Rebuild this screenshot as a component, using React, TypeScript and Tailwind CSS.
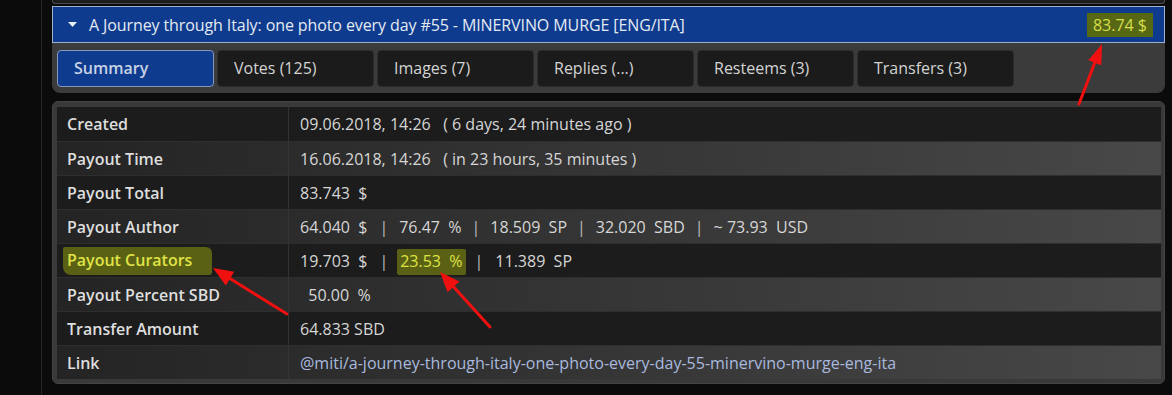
import React from "react";

const Sep = () => <span className="px-[10px] text-[#bdbdbd]">|</span>;

const rows: { label: React.ReactNode; value: React.ReactNode }[] = [
  { label: "Created", value: "09.06.2018, 14:26   ( 6 days, 24 minutes ago )" },
  { label: "Payout Time", value: "16.06.2018, 14:26   ( in 23 hours, 35 minutes )" },
  { label: "Payout Total", value: "83.743  $" },
  {
    label: "Payout Author",
    value: (
      <>
        {"64.040  $"}
        <span className="pl-[12px] pr-[11px] text-[#bdbdbd]">|</span>
        {"76.47  %"}
        <Sep />
        {"18.509  SP"}
        <Sep />
        {"32.020  SBD"}
        <Sep />
        {"~ 73.93  USD"}
      </>
    ),
  },
  {
    label: (
      <span className="bg-[#5a6114] text-[#dfe345] -ml-[4px] pl-[4px] pr-[20px] pt-[1px] pb-[3px] rounded-[2px_6px_3px_8px]">
        Payout Curators
      </span>
    ),
    value: (
      <>
        {"19.703  $"}
        <span className="pl-[12px] pr-[9px] text-[#bdbdbd]">|</span>
        <span className="bg-[#5a6114] text-[#dfe345] px-[3px] pt-[1px] pb-[3px] rounded-[2px]">{"23.53  %"}</span>
        <span className="pl-[9px] pr-[12px] text-[#bdbdbd]">|</span>
        {"11.389  SP"}
      </>
    ),
  },
  { label: "Payout Percent SBD", value: "  50.00  %" },
  { label: "Transfer Amount", value: "64.833 SBD" },
  {
    label: "Link",
    value: (
      <span className="text-[#a9b9df]">@miti/a-journey-through-italy-one-photo-every-day-55-minervino-murge-eng-ita</span>
    ),
  },
];

const tabs = ["Summary", "Votes (125)", "Images (7)", "Replies (...)", "Resteems (3)", "Transfers (3)"];

export default function App() {
  return (
    <div className="relative w-[1172px] h-[395px] overflow-hidden bg-[#0b0b0b] font-['Open_Sans',sans-serif] text-[16px]">
      <div className="ml-[41px] h-full border-l border-[#262626] pl-[10px] w-[1124px]">
        {/* previous panel remnant */}
        <div className="h-[4px] bg-[#1c1c1c] border-x border-b border-[#4a4a4a] rounded-b-[3px]" />
        {/* header */}
        <div className="mt-[2px] h-[37px] bg-[#0e3b8d] border border-[#9fb0cc] flex items-center pl-[15px] pr-[11px]">
          <svg width="9" height="6" viewBox="0 0 9 6" className="mr-[12px]">
            <polygon points="0,0 9,0 4.5,5" fill="#e8eef8" />
          </svg>
          <span className="text-[#e4eaf4] leading-none tracking-[-0.1px]">
            A Journey through Italy: one photo every day #55 - MINERVINO MURGE [ENG/ITA]
          </span>
          <span className="ml-auto bg-[#566814] text-[#d6df4c] px-[6px] h-[24px] flex items-center leading-none">
            83.74 $
          </span>
        </div>
        {/* tabs */}
        <div className="h-[50px] bg-[#3b3b3b] rounded-b-[8px] flex items-center gap-[3px] pl-[5px]">
          {tabs.map((t, i) =>
            i === 0 ? (
              <div
                key={t}
                className="w-[157px] h-[37px] rounded-[4px] bg-[#0e3b8d] border border-[#8597bd] flex items-center pl-[16px] font-semibold text-[#c7d2e6]"
              >
                {t}
              </div>
            ) : (
              <div
                key={t}
                className="w-[157px] h-[37px] rounded-[4px] bg-[#1b1b1b] border border-[#2c2c2c] flex items-center pl-[16px] text-[#d3d3d3]"
              >
                {t}
              </div>
            )
          )}
        </div>
        {/* table */}
        <div className="mt-[8px] bg-[#393939] border border-[#444] rounded-[6px] pt-[5px] pl-[4px] pr-[3px] pb-[4px]">
          {rows.map((r, i) => (
            <div
              key={i}
              className={
                "flex h-[34px] items-center " +
                (i > 0 ? "border-t border-[#2e2e2e] " : "") +
                (i % 2 === 1 ? "bg-linear-to-r from-[#242424] to-[#484848]" : "bg-[#1c1c1c]")
              }
            >
              <div className="w-[232px] h-full flex items-center pl-[10px] font-semibold text-[#dedede] border-r border-[#333]">
                {r.label}
              </div>
              <div className="flex-1 pl-[11px] text-[#d6d6d6] whitespace-pre">{r.value}</div>
            </div>
          ))}
        </div>
      </div>
      <svg className="absolute left-0 top-0 pointer-events-none" width="1172" height="395" viewBox="0 0 1172 395">
        <g stroke="#f01010" strokeWidth="3" strokeLinecap="round" fill="#f01010">
          <line x1="1079" y1="104" x2="1095" y2="62" />
          <polygon points="1102,44 1101.3,65.2 1088.3,60.2" stroke="none" />
          <line x1="287" y1="314" x2="230" y2="278.6" />
          <polygon points="213,268 234.2,271.8 225.8,285.4" stroke="none" />
          <line x1="490" y1="327" x2="453.5" y2="286.8" />
          <polygon points="440,272 459.4,281.4 447.6,292.2" stroke="none" />
        </g>
      </svg>
    </div>
  );
}
